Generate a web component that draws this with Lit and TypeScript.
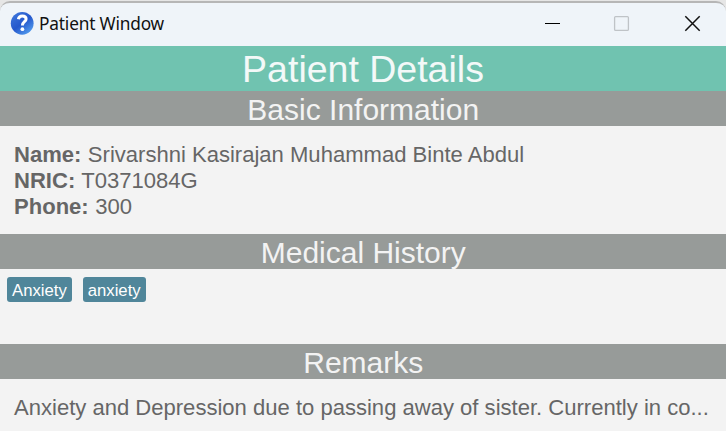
import { LitElement, html, css } from "lit";
import { customElement, property } from "lit/decorators.js";

@customElement("title-bar")
class TitleBar extends LitElement {
  @property() label = "";

  static styles = css`
    :host {
      display: block;
      box-sizing: border-box;
      height: 46px;
      padding-top: 1px;
      background: #e6e6e6;
    }
    .bar {
      box-sizing: border-box;
      display: flex;
      align-items: center;
      border-top: 2px solid #b6b6b6;
      border-radius: 10px 10px 0 0;
      height: 45px;
      background: #eff4f9;
      padding: 0 25px 3px 10px;
    }
    .help {
      width: 24px;
      height: 24px;
      flex: none;
    }
    .label {
      flex: 1;
      margin-left: 5px;
      padding-top: 1px;
      font: 17.3px/24px "Noto Sans", "Open Sans", sans-serif;
      letter-spacing: -0.18px;
      color: #111;
      white-space: nowrap;
    }
    .controls {
      display: flex;
      align-items: center;
      gap: 52px;
    }
    .controls svg {
      display: block;
      width: 18px;
      height: 18px;
    }
  `;

  render() {
    return html`
      <div class="bar">
        <svg class="help" viewBox="0 0 24 24">
          <defs>
            <linearGradient id="ball" x1="0.1" y1="0" x2="0.9" y2="1">
              <stop offset="0" stop-color="#3f78dc" />
              <stop offset="0.5" stop-color="#2558cc" />
              <stop offset="1" stop-color="#5aa8f4" />
            </linearGradient>
          </defs>
          <circle cx="12.2" cy="12.3" r="11.4" fill="url(#ball)" />
          <path
            d="M8.4 8.2C8.8 5.8 10.2 4.9 12.3 4.9C14.7 4.9 16.1 6.2 16.1 8C16.1 10.6 12.4 10.9 12.4 14.4"
            fill="none"
            stroke="#fff"
            stroke-width="3"
          />
          <circle cx="12.4" cy="18.2" r="1.9" fill="#fff" />
        </svg>
        <span class="label">${this.label}</span>
        <div class="controls">
          <svg viewBox="0 0 18 18"><path d="M2 9.5H17" stroke="#000" /></svg>
          <svg viewBox="0 0 18 18">
            <rect x="1.6" y="2.6" width="13.8" height="13.8" rx="1" fill="none" stroke="#bfc3c7" stroke-width="1.3" />
          </svg>
          <svg viewBox="0 0 18 18">
            <path d="M2.3 2.3L16.7 16.7M16.7 2.3L2.3 16.7" stroke="#111" stroke-width="1.5" />
          </svg>
        </div>
      </div>
    `;
  }
}

@customElement("app-root")
class AppRoot extends LitElement {
  private fields = [
    ["Name:", "Srivarshni Kasirajan Muhammad Binte Abdul"],
    ["NRIC:", "T0371084G"],
    ["Phone:", "300"],
  ];
  private conditions = ["Anxiety", "anxiety"];

  static styles = css`
    :host {
      display: block;
      height: 431px;
      overflow: hidden;
      background: #f3f3f3;
      font-family: "Liberation Sans", Arial, sans-serif;
      color: #666;
    }
    .title {
      height: 45px;
      line-height: 46px;
      background: #70c3b0;
      color: #f3f9f8;
      font-size: 37.5px;
      text-align: center;
    }
    .section {
      height: 35px;
      line-height: 37px;
      background: #979b99;
      color: #f3f3f3;
      font-size: 30px;
      text-align: center;
      text-indent: 0.5px;
    }
    .fields {
      box-sizing: border-box;
      height: 108px;
      padding: 16px 14px 0;
      font-size: 22.06px;
      line-height: 26px;
    }
    .fields b {
      margin-right: 0.3px;
    }
    .tags {
      box-sizing: border-box;
      height: 75px;
      padding: 8px 7px 0;
      display: flex;
      align-items: flex-start;
      gap: 11px;
    }
    .tag {
      height: 25px;
      padding: 0 5px;
      border-radius: 3px;
      background: #50869a;
      color: #fff;
      font-size: 16.7px;
      line-height: 27px;
    }
    .remarks {
      padding: 16px 14px 0;
      font-size: 22.06px;
      line-height: 26px;
      white-space: nowrap;
    }
  `;

  render() {
    return html`
      <title-bar label="Patient Window"></title-bar>
      <div class="title">Patient Details</div>
      <div class="section">Basic Information</div>
      <div class="fields">
        ${this.fields.map(([k, v]) => html`<div><b>${k}</b> ${v}</div>`)}
      </div>
      <div class="section">Medical History</div>
      <div class="tags">
        ${this.conditions.map((c) => html`<span class="tag">${c}</span>`)}
      </div>
      <div class="section">Remarks</div>
      <div class="remarks">
        Anxiety and Depression due to passing away of sister. Currently in co...
      </div>
    `;
  }
}
